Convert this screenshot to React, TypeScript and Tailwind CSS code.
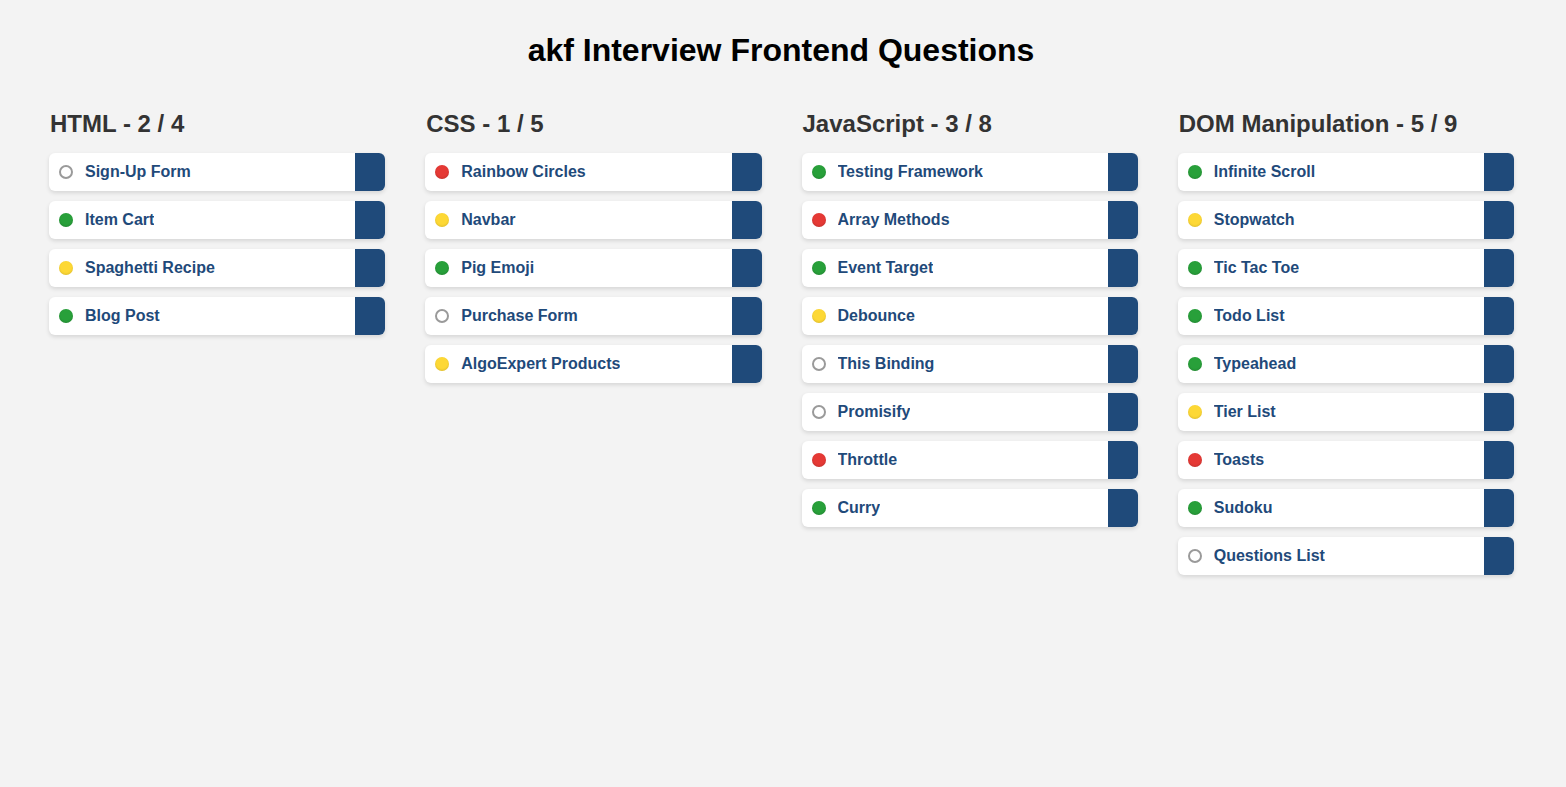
type Status = 'none' | 'red' | 'yellow' | 'green';

interface Question {
  name: string;
  status: Status;
}

interface Category {
  title: string;
  questions: Question[];
}

const CATEGORIES: Category[] = [
  {
    title: 'HTML',
    questions: [
      { name: 'Sign-Up Form', status: 'none' },
      { name: 'Item Cart', status: 'green' },
      { name: 'Spaghetti Recipe', status: 'yellow' },
      { name: 'Blog Post', status: 'green' },
    ],
  },
  {
    title: 'CSS',
    questions: [
      { name: 'Rainbow Circles', status: 'red' },
      { name: 'Navbar', status: 'yellow' },
      { name: 'Pig Emoji', status: 'green' },
      { name: 'Purchase Form', status: 'none' },
      { name: 'AlgoExpert Products', status: 'yellow' },
    ],
  },
  {
    title: 'JavaScript',
    questions: [
      { name: 'Testing Framework', status: 'green' },
      { name: 'Array Methods', status: 'red' },
      { name: 'Event Target', status: 'green' },
      { name: 'Debounce', status: 'yellow' },
      { name: 'This Binding', status: 'none' },
      { name: 'Promisify', status: 'none' },
      { name: 'Throttle', status: 'red' },
      { name: 'Curry', status: 'green' },
    ],
  },
  {
    title: 'DOM Manipulation',
    questions: [
      { name: 'Infinite Scroll', status: 'green' },
      { name: 'Stopwatch', status: 'yellow' },
      { name: 'Tic Tac Toe', status: 'green' },
      { name: 'Todo List', status: 'green' },
      { name: 'Typeahead', status: 'green' },
      { name: 'Tier List', status: 'yellow' },
      { name: 'Toasts', status: 'red' },
      { name: 'Sudoku', status: 'green' },
      { name: 'Questions List', status: 'none' },
    ],
  },
];

// filled dots get a soft inner shading like the original
const DOT_CLASS: Record<Status, string> = {
  none: 'bg-white border-2 border-[#9a9a9a]',
  red: 'bg-[#e53935] shadow-[inset_0_-1px_2px_rgba(0,0,0,0.15)]',
  yellow: 'bg-[#fdd835] shadow-[inset_0_-1px_2px_rgba(0,0,0,0.12)]',
  green: 'bg-[#28a03a] shadow-[inset_0_-1px_2px_rgba(0,0,0,0.15)]',
};

function StatusDot({ status }: { status: Status }) {
  return <span className={`w-[14px] h-[14px] rounded-full flex-shrink-0 ${DOT_CLASS[status]}`} />;
}

function QuestionRow({ q }: { q: Question }) {
  return (
    <div className="flex h-[38px] bg-white rounded-md shadow-[0_2px_4px_rgba(0,0,0,0.12)] overflow-hidden">
      <div className="flex items-center flex-1 min-w-0 pl-[10px] gap-[12px]">
        <StatusDot status={q.status} />
        <span className="text-[16px] font-bold text-[#1f4a7a] truncate">{q.name}</span>
      </div>
      <div className="w-[30px] bg-[#1f4a7a] flex-shrink-0" />
    </div>
  );
}

export default function App() {
  return (
    <div className="min-h-[787px] bg-[#f3f3f3] font-['Liberation_Sans',Arial,sans-serif]">
      <h1 className="text-[32px] font-bold text-black text-center pt-[32px] pr-[4px] leading-[37px]">
        akf Interview Frontend Questions
      </h1>

      <div className="grid grid-cols-4 gap-10 pl-[49px] pr-[52px] pt-[41px]">
        {CATEGORIES.map((cat) => {
          const done = cat.questions.filter((q) => q.status === 'green').length;
          return (
            <div key={cat.title} className="flex flex-col">
              <h2 className="text-[24px] font-bold text-[#333] leading-[28px] mb-[15px] pl-[1px]">
                {cat.title} - {done} / {cat.questions.length}
              </h2>
              <div className="flex flex-col gap-[10px]">
                {cat.questions.map((q) => (
                  <QuestionRow key={q.name} q={q} />
                ))}
              </div>
            </div>
          );
        })}
      </div>
    </div>
  );
}
